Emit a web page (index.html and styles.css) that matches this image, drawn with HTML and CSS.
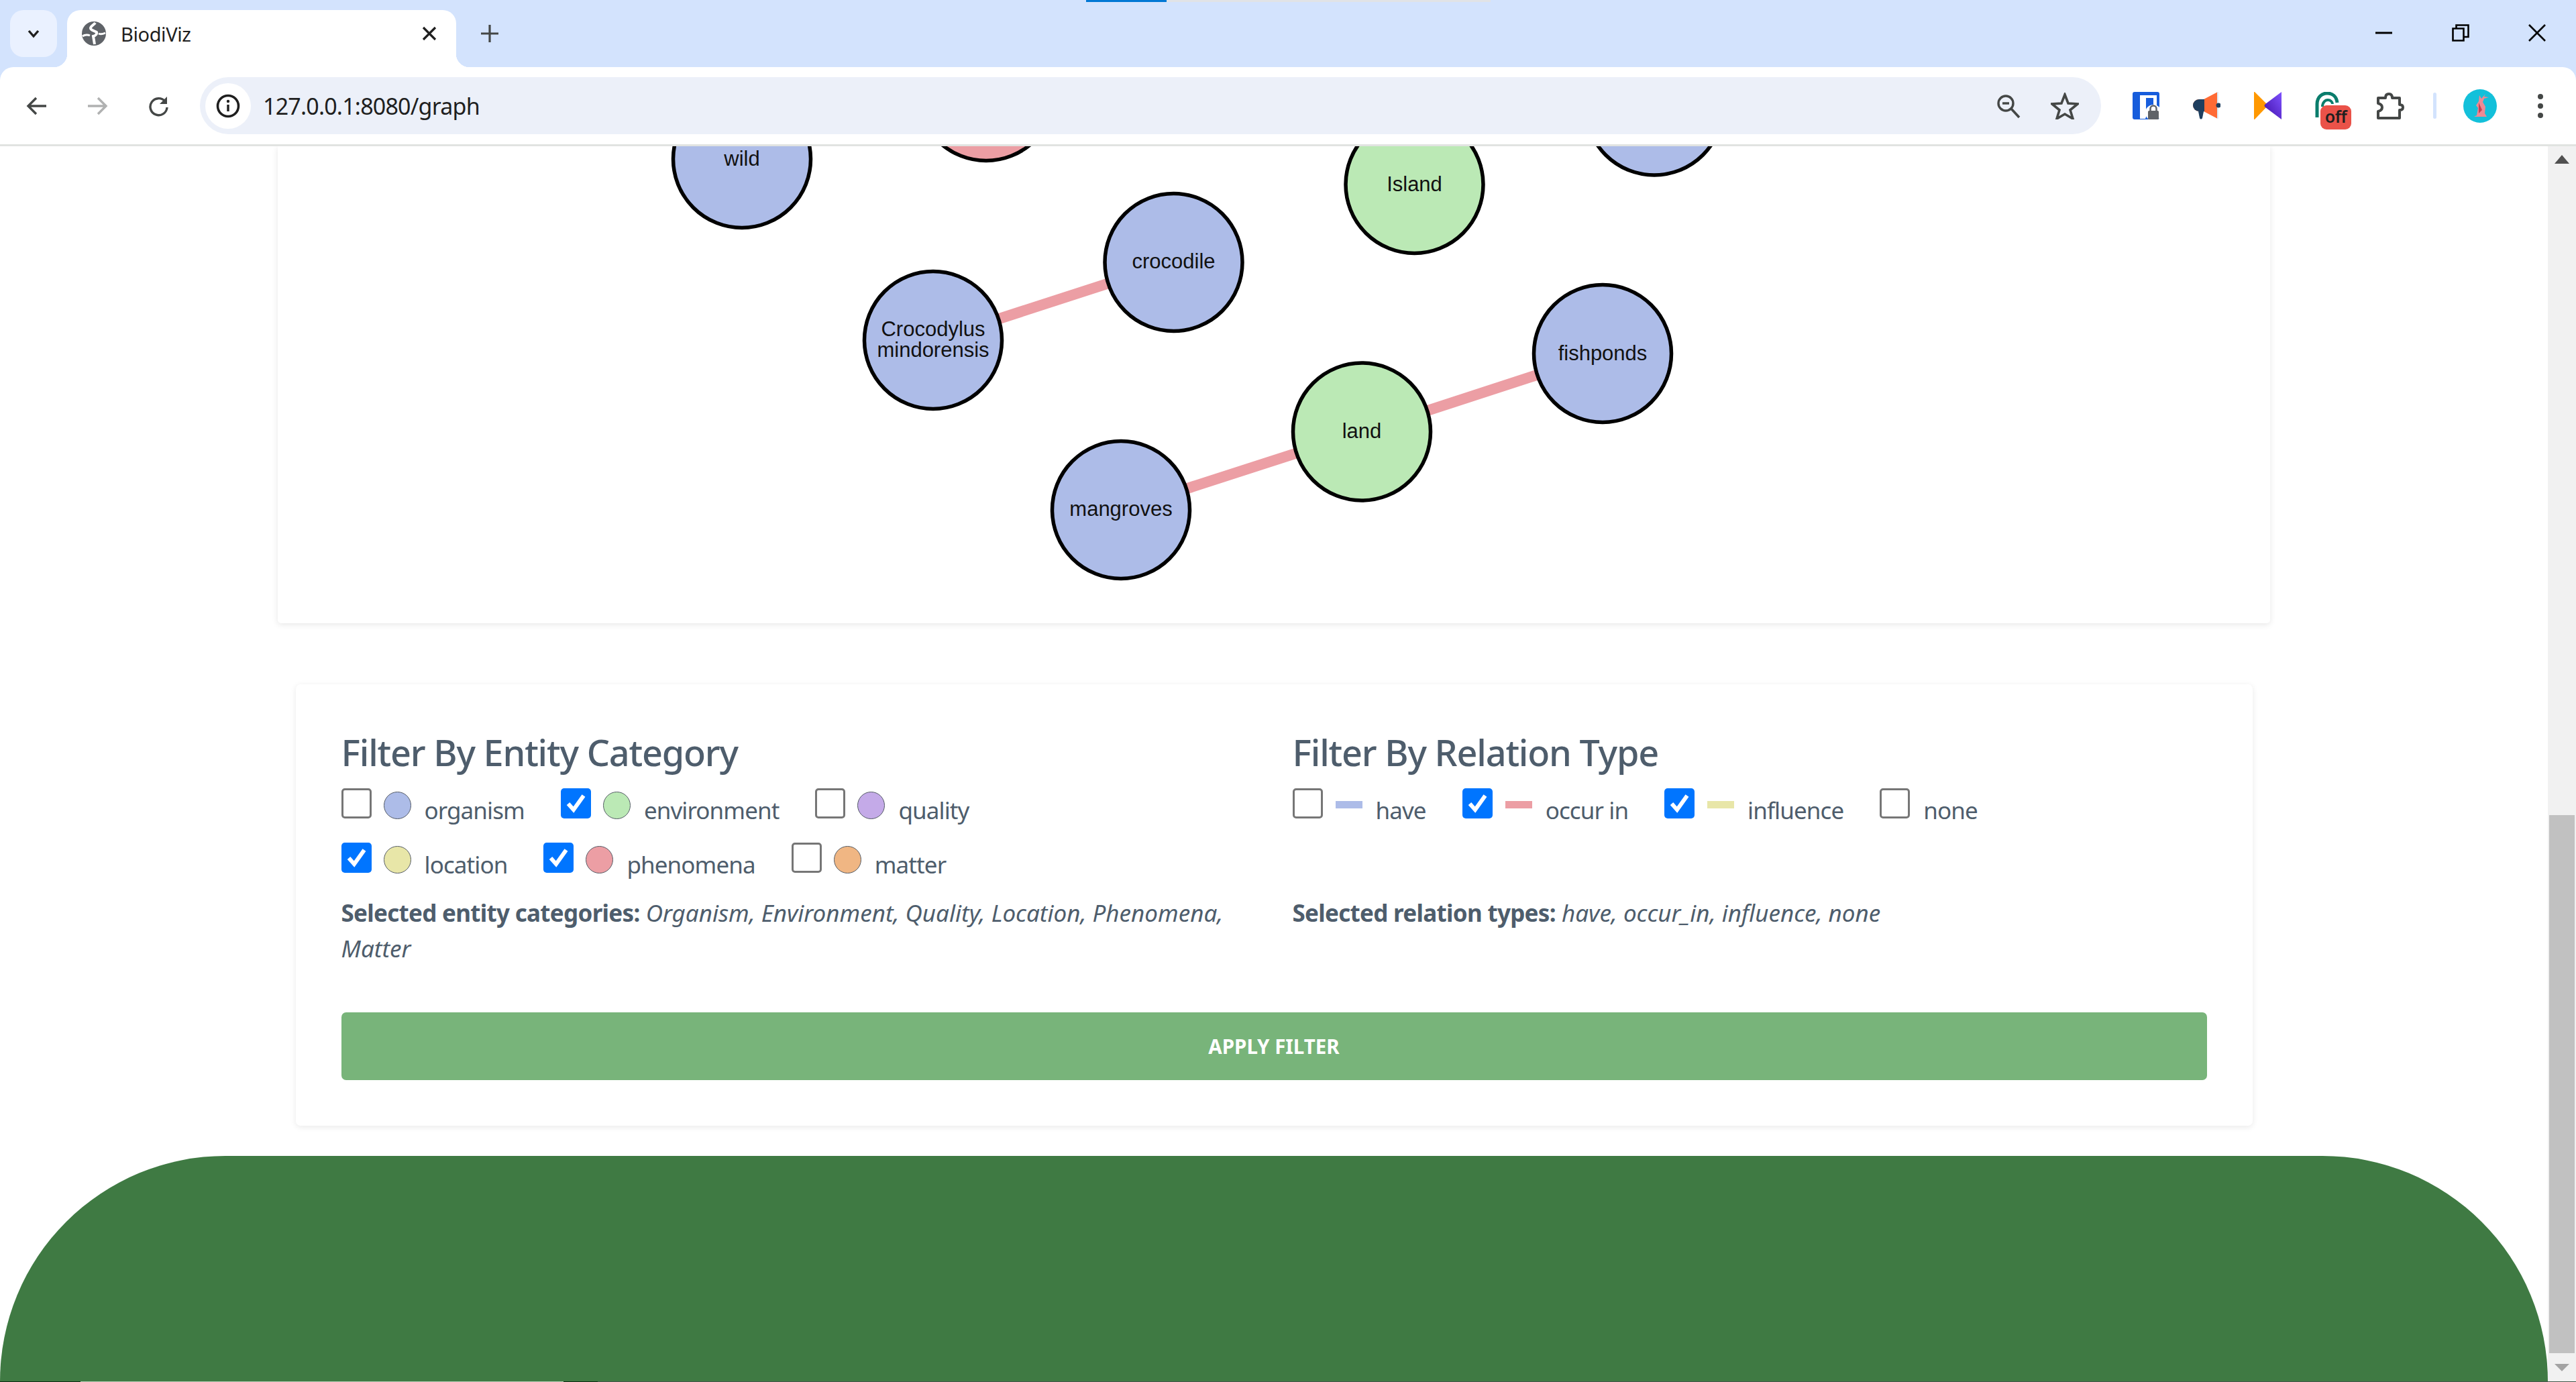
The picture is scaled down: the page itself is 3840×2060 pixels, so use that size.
FILE: index.html
```html
<!DOCTYPE html>
<html lang="en">
<head>
    <meta charset="UTF-8">
    <title>BiodiViz</title>
    <link rel="stylesheet" href="styles.css">
</head>
<body>
    <div class="tabstrip">
        <div class="load-bar"><span class="load-done"></span><span class="load-rest"></span></div>
        <button class="tab-search">
            <svg width="24" height="24" viewBox="0 0 24 24"><path d="M5 8l7 8 7-8" fill="none" stroke="#1f1f1f" stroke-width="3.4"/></svg>
        </button>
        <div class="tab">
            <svg class="favicon" width="36" height="36" viewBox="0 0 36 36">
                <circle cx="18" cy="18" r="18" fill="#5f6368"/>
                <path d="M20 2c-2 3-7 5-7 8s6 4 9 6c1 2-1 5-5 6l2 12" fill="none" stroke="#fff" stroke-width="4"/>
                <path d="M1 22c4-3 9-2 11-1M35 17c-4 2-8 2-10 1" fill="none" stroke="#fff" stroke-width="3"/>
            </svg>
            <span class="tab-title">BiodiViz</span>
            <svg class="tab-close" width="24" height="24" viewBox="0 0 24 24"><path d="M3 3l18 18M21 3L3 21" stroke="#1f1f1f" stroke-width="3.2"/></svg>
        </div>
        <svg class="new-tab" width="28" height="28" viewBox="0 0 28 28"><path d="M14 1v26M1 14h26" stroke="#444746" stroke-width="3.2"/></svg>
        <div class="window-btns">
            <svg width="26" height="26" viewBox="0 0 26 26"><path d="M0 13h25" stroke="#000" stroke-width="3"/></svg>
            <svg width="26" height="26" viewBox="0 0 26 26"><path d="M1.5 6.5h16v18h-16zM6.5 6V1.5h18V19h-6" fill="none" stroke="#000" stroke-width="2.6"/></svg>
            <svg width="26" height="26" viewBox="0 0 26 26"><path d="M1 1l24 24M25 1L1 25" stroke="#000" stroke-width="2.6"/></svg>
        </div>
    </div>

    <div class="toolbar">
        <svg class="nav-btn" width="32" height="32" viewBox="0 0 32 32"><path d="M30 16H4M15 4L3 16l12 12" fill="none" stroke="#444746" stroke-width="3.4"/></svg>
        <svg class="nav-btn" width="32" height="32" viewBox="0 0 32 32"><path d="M2 16h26M17 4l12 12-12 12" fill="none" stroke="#b0b1b1" stroke-width="3.4"/></svg>
        <svg class="nav-btn" width="32" height="32" viewBox="0 0 32 32"><path d="M26 9a12.500 12.500 0 1 0 3 9" fill="none" stroke="#444746" stroke-width="3.4"/><path d="M29 2v11H18z" fill="#444746"/></svg>
        <div class="omnibox">
            <div class="info-chip">
                <svg width="36" height="36" viewBox="0 0 36 36"><circle cx="18" cy="18" r="15.500" fill="none" stroke="#1f1f1f" stroke-width="3.6"/><path d="M18 16v10" stroke="#1f1f1f" stroke-width="3.4"/><circle cx="18" cy="11" r="2.200" fill="#1f1f1f"/></svg>
            </div>
            <span class="url">127.0.0.1:8080/graph</span>
            <svg class="omni-icon zoom-icon" width="38" height="38" viewBox="0 0 38 38"><circle cx="15" cy="15" r="11" fill="none" stroke="#444746" stroke-width="3.4"/><path d="M10 15h10" stroke="#444746" stroke-width="3.4"/><path d="M23 23l12 13" stroke="#444746" stroke-width="3.6"/></svg>
            <svg class="omni-icon" width="42" height="40" viewBox="0 0 42 40"><path d="M21 3l5 13 14 1-11 9 4 13-12-7-12 7 4-13L2 17l14-1z" fill="none" stroke="#444746" stroke-width="3.6"/></svg>
        </div>
        <div class="extensions">
            <svg class="ext" width="40" height="41" viewBox="0 0 40 41">
                <rect width="40" height="41" rx="3" fill="#175ddc"/>
                <path d="M11 5h25v22H24l-5 13h-8z" fill="#fff"/>
                <path d="M20 9h11v14h-8l-3 5z" fill="#175ddc"/>
                <circle cx="31" cy="31" r="12" fill="#fff"/>
                <rect x="23" y="28" width="16" height="13" rx="1.500" fill="#5f6368"/>
                <path d="M26.500 29v-4a4.500 4.500 0 0 1 9 0v4" fill="none" stroke="#5f6368" stroke-width="2.500"/>
            </svg>
            <svg class="ext" width="41" height="41" viewBox="0 0 41 41">
                <path d="M37 0L16 11H9a9 9 0 0 0 0 18h7l21 11z" fill="#ff6b35"/>
                <path d="M17 11H9a9 9 0 0 0 0 18h8z" fill="#1f3f5f"/>
                <path d="M8 29h8l-2 10c-1 2-3 2-4 0z" fill="#1f3f5f"/>
                <path d="M37 0v40" stroke="#dcecf7" stroke-width="2"/>
                <circle cx="38" cy="20" r="3.500" fill="#1f3f5f"/>
            </svg>
            <svg class="ext" width="41" height="41" viewBox="0 0 41 41">
                <defs><linearGradient id="kotlin" x1="0" y1="1" x2="1" y2="0"><stop offset="0" stop-color="#3f0fa8"/><stop offset="1" stop-color="#7f52ff"/></linearGradient></defs>
                <path d="M0 0h1l20 20L1 41H0z" fill="#ff9800"/>
                <path d="M41 0v41L17 23c-2-2-2-3 0-5z" fill="url(#kotlin)"/>
            </svg>
            <div class="ext ext-off">
                <svg width="36" height="38" viewBox="0 0 36 38"><path d="M3 38V18C3 8 10 2 18 2s14 5 15 14" fill="none" stroke="#0a7d6c" stroke-width="5"/><path d="M11 22c0-6 4-10 8-10 4 0 7 3 7 6" fill="none" stroke="#0a7d6c" stroke-width="4"/></svg>
                <span class="off-badge">off</span>
            </div>
            <svg class="ext" width="42" height="42" viewBox="0 0 42 42"><path d="M3 9h11c0-3 1-6 5-6s5 3 5 6h11v10c4 0 5 2 5 4s-1 4-5 4v12H3V29c4-1 6-3 6-6s-2-5-6-6z" fill="none" stroke="#444746" stroke-width="4" stroke-linejoin="round"/></svg>
            <span class="toolbar-sep"></span>
            <div class="avatar">
                <svg width="50" height="50" viewBox="0 0 50 50"><path d="M33 7l-6 7-3-5-1 9-4 6 3 4-2 11-4 2h19l-3-5 1-10-4-7 2-5 7-2-7-1z" fill="#ee8a95"/><path d="M23 20l5 11-5 5z" fill="#c9404f"/></svg>
            </div>
            <svg class="ext kebab" width="12" height="42" viewBox="0 0 12 42"><circle cx="6" cy="7" r="4" fill="#444746"/><circle cx="6" cy="21" r="4" fill="#444746"/><circle cx="6" cy="35" r="4" fill="#444746"/></svg>
        </div>
    </div>

    <div class="viewport">
        <main class="page">
            <section class="graph-card">
                <svg class="graph" width="2970" height="711" viewBox="414 218 2970 711">
                    <g class="edges">
                        <line x1="1391" y1="507" x2="1749" y2="391"/>
                        <line x1="1671" y1="760" x2="2030" y2="644"/>
                        <line x1="2030" y1="644" x2="2389" y2="527"/>
                    </g>
                    <g class="nodes">
                        <circle class="organism" cx="1106" cy="237" r="102.500"/>
                        <circle class="phenomena" cx="1470" cy="137" r="102.500"/>
                        <circle class="environment" cx="2108.500" cy="275" r="102.500"/>
                        <circle class="organism" cx="2466" cy="158.500" r="102.500"/>
                        <circle class="organism" cx="1749.500" cy="391" r="102.500"/>
                        <circle class="organism" cx="1391" cy="507" r="102.500"/>
                        <circle class="environment" cx="2030" cy="643.500" r="102.500"/>
                        <circle class="organism" cx="2389" cy="527" r="102.500"/>
                        <circle class="organism" cx="1671" cy="760" r="102.500"/>
                    </g>
                    <g class="labels">
                        <text x="1106" y="247">wild</text>
                        <text x="2108.500" y="285">Island</text>
                        <text x="1749.500" y="400">crocodile</text>
                        <text x="1391" y="501">Crocodylus</text>
                        <text x="1391" y="532">mindorensis</text>
                        <text x="2030" y="653">land</text>
                        <text x="2389" y="537">fishponds</text>
                        <text x="1671" y="769">mangroves</text>
                    </g>
                </svg>
            </section>

            <section class="filter-card">
                <div class="filter-cols">
                    <div class="filter-col">
                        <h4>Filter By Entity Category</h4>
                        <div class="check-row">
                            <label class="check"><span class="box"></span><span class="dot organism"></span><span class="check-text">organism</span></label>
                            <label class="check"><span class="box on"><svg width="45" height="45" viewBox="0 0 45 45"><path d="M11 23l8 9 15-21" fill="none" stroke="#fff" stroke-width="6"/></svg></span><span class="dot environment"></span><span class="check-text">environment</span></label>
                            <label class="check"><span class="box"></span><span class="dot quality"></span><span class="check-text">quality</span></label>
                        </div>
                        <div class="check-row">
                            <label class="check"><span class="box on"><svg width="45" height="45" viewBox="0 0 45 45"><path d="M11 23l8 9 15-21" fill="none" stroke="#fff" stroke-width="6"/></svg></span><span class="dot location"></span><span class="check-text">location</span></label>
                            <label class="check"><span class="box on"><svg width="45" height="45" viewBox="0 0 45 45"><path d="M11 23l8 9 15-21" fill="none" stroke="#fff" stroke-width="6"/></svg></span><span class="dot phenomena"></span><span class="check-text">phenomena</span></label>
                            <label class="check"><span class="box"></span><span class="dot matter"></span><span class="check-text">matter</span></label>
                        </div>
                        <p class="selected"><strong>Selected entity categories:</strong> <em>Organism, Environment, Quality, Location, Phenomena, Matter</em></p>
                    </div>
                    <div class="filter-col">
                        <h4>Filter By Relation Type</h4>
                        <div class="check-row relation-row">
                            <label class="check"><span class="box"></span><span class="dash organism"></span><span class="check-text">have</span></label>
                            <label class="check"><span class="box on"><svg width="45" height="45" viewBox="0 0 45 45"><path d="M11 23l8 9 15-21" fill="none" stroke="#fff" stroke-width="6"/></svg></span><span class="dash phenomena"></span><span class="check-text">occur in</span></label>
                            <label class="check"><span class="box on"><svg width="45" height="45" viewBox="0 0 45 45"><path d="M11 23l8 9 15-21" fill="none" stroke="#fff" stroke-width="6"/></svg></span><span class="dash location"></span><span class="check-text">influence</span></label>
                            <label class="check"><span class="box"></span><span class="check-text">none</span></label>
                        </div>
                        <p class="selected"><strong>Selected relation types:</strong> <em>have, occur_in, influence, none</em></p>
                    </div>
                </div>
                <button class="apply-btn">Apply Filter</button>
            </section>

            <footer class="footer"></footer>
        </main>
        <div class="scrollbar">
            <svg width="42" height="42" viewBox="0 0 42 42"><path d="M10 26l11-13 11 13z" fill="#505050"/></svg>
            <div class="scroll-space"></div>
            <div class="scroll-thumb"></div>
            <svg width="42" height="42" viewBox="0 0 42 42"><path d="M10 16h22L21 27z" fill="#a3a3a3"/></svg>
        </div>
    </div>
    <div class="taskbar-edge"><span class="edge-a"></span><span class="edge-b"></span><span class="edge-c"></span></div>
</body>
</html>
```

FILE: styles.css
```css
html, body {
    margin: 0;
    height: 100%;
    overflow: hidden;
}
body {
    display: flex;
    flex-direction: column;
    height: 2060px;
    background-color: #d3e3fd;
    font-family: "Noto Sans", sans-serif;
}
button {
    font-family: inherit;
    border: none;
}

/* browser chrome */
.tabstrip {
    position: relative;
    display: flex;
    align-items: flex-start;
    height: 100px;
    flex: none;
    padding: 15px 0 0 15px;
    box-sizing: border-box;
}
.load-bar {
    position: absolute;
    top: 0;
    left: 1619px;
    display: flex;
    height: 3px;
}
.load-done {
    width: 120px;
    background-color: #0078d4;
}
.load-rest {
    width: 483px;
    background-color: #e1e3e6;
}
.tab-search {
    display: flex;
    align-items: center;
    justify-content: center;
    width: 70px;
    height: 70px;
    padding: 0;
    border-radius: 20px;
    background-color: #eaf1ff;
}
.tab {
    position: relative;
    display: flex;
    align-items: center;
    width: 580px;
    height: 85px;
    margin-left: 15px;
    padding: 0 28px 15px 22px;
    box-sizing: border-box;
    background-color: #fff;
    border-radius: 20px 20px 0 0;
}
.tab::before,
.tab::after {
    content: "";
    position: absolute;
    bottom: 0;
    width: 20px;
    height: 20px;
}
.tab::before {
    left: -20px;
    background: radial-gradient(circle at 0 0, transparent 20px, #fff 20.5px);
}
.tab::after {
    right: -20px;
    background: radial-gradient(circle at 100% 0, transparent 20px, #fff 20.5px);
}
.tab-title {
    flex: 1;
    margin-left: 22px;
    font-size: 29px;
    letter-spacing: -0.4px;
    color: #1f1f1f;
}
.new-tab {
    margin: 21px 0 0 36px;
}
.window-btns {
    display: flex;
    gap: 88px;
    margin: 21px 45px 0 auto;
}
.toolbar {
    display: flex;
    align-items: center;
    flex: none;
    height: 118px;
    padding: 3px 0 3px 39px;
    box-sizing: border-box;
    background-color: #fff;
    border-bottom: 3px solid #e1e3e1;
    border-radius: 20px 20px 0 0;
}
.nav-btn {
    margin-right: 58px;
}
.nav-btn:nth-child(3) {
    margin-right: 0;
    margin-left: 1px;
}
.omnibox {
    display: flex;
    align-items: center;
    flex: none;
    width: 2834px;
    height: 85px;
    margin-left: 46px;
    padding: 0 33px 0 8px;
    box-sizing: border-box;
    background-color: #ecf0f9;
    border-radius: 43px;
}
.info-chip {
    display: flex;
    align-items: center;
    justify-content: center;
    width: 68px;
    height: 68px;
    background-color: #fff;
    border-radius: 50%;
}
.url {
    flex: 1;
    margin-left: 18px;
    font-size: 34px;
    letter-spacing: -0.8px;
    color: #1f1f1f;
}
.omni-icon {
    margin-left: 44px;
}
.extensions {
    display: flex;
    align-items: center;
    flex: 1;
    padding-left: 47px;
}
.ext {
    flex: none;
    margin-right: 50px;
}
.ext-off {
    position: relative;
    width: 41px;
    height: 41px;
}
.off-badge {
    position: absolute;
    left: 8px;
    top: 20px;
    width: 46px;
    height: 36px;
    border-radius: 9px;
    background-color: #ea5249;
    color: #1f1f1f;
    font-size: 25px;
    font-weight: 600;
    line-height: 32px;
    text-align: center;
    letter-spacing: -0.5px;
}
.toolbar-sep {
    width: 5px;
    height: 39px;
    margin-left: -7px;
    border-radius: 3px;
    background-color: #d3e3fd;
}
.avatar {
    width: 50px;
    height: 50px;
    margin-left: 40px;
    border-radius: 50%;
    background-color: #13c0da;
}
.kebab {
    margin: 0 0 0 59px;
}

/* page */
.viewport {
    display: flex;
    flex: 1;
    min-height: 0;
    background-color: #fff;
}
.page {
    display: flex;
    flex-direction: column;
    align-items: center;
    width: 3798px;
    overflow: hidden;
}
.scrollbar {
    display: flex;
    flex-direction: column;
    width: 42px;
    background-color: #f1f1f1;
}
.scroll-space {
    height: 955px;
}
.scroll-thumb {
    width: 38px;
    height: 802px;
    margin-left: 2px;
    background-color: #c1c1c1;
}
.graph-card {
    width: 2970px;
    height: 711px;
    flex: none;
    background-color: #fff;
    box-shadow: 0 2px 10px rgba(0, 0, 0, 0.1);
    border-radius: 0 0 5px 5px;
}
.graph {
    display: block;
}
.edges line {
    stroke: #ec9ea4;
    stroke-width: 16;
}
.nodes circle {
    stroke: #000;
    stroke-width: 5.5;
}
circle.organism { fill: #adbce8; }
circle.environment { fill: #bbe9b5; }
circle.phenomena { fill: #ec9ea4; }
.labels text {
    font-family: "Liberation Sans", Arial, sans-serif;
    font-size: 31px;
    text-anchor: middle;
    fill: #111;
}
.filter-card {
    display: flex;
    flex-direction: column;
    flex: none;
    width: 2917px;
    height: 658px;
    margin-top: 91px;
    padding: 67px 68px 68px;
    box-sizing: border-box;
    background-color: #fff;
    border-radius: 7px;
    box-shadow: 0 2px 10px rgba(0, 0, 0, 0.09);
    color: #4e5d6c;
}
.filter-cols {
    display: grid;
    grid-template-columns: 1418px 1fr;
    height: 422px;
}
.filter-col {
    min-width: 0;
    padding-right: 60px;
}
.filter-col h4 {
    margin: 0;
    font-size: 54px;
    font-weight: 500;
    line-height: 68px;
    letter-spacing: -1.2px;
}
.check-row {
    display: flex;
    gap: 54px;
    height: 81px;
    align-items: flex-start;
    margin-top: 20px;
}
.check-row + .check-row {
    margin-top: 0;
}
.check {
    display: flex;
    align-items: flex-start;
    font-size: 35px;
    letter-spacing: -0.9px;
}
.box {
    flex: none;
    width: 45px;
    height: 45px;
    box-sizing: border-box;
    border: 3px solid #767676;
    border-radius: 5px;
    background-color: #fff;
}
.box.on {
    border: none;
    background-color: #0075ff;
}
.box svg {
    display: block;
}
.dot {
    flex: none;
    width: 41px;
    height: 41px;
    margin: 5px 0 0 18px;
    box-sizing: border-box;
    border: 1px solid #555c66;
    border-radius: 50%;
}
.dash {
    flex: none;
    width: 40px;
    height: 11px;
    margin: 19px 0 0 19px;
}
.organism { background-color: #adbce8; }
.environment { background-color: #bbe9b5; }
.quality { background-color: #c4aae8; }
.location { background-color: #e8e6a8; }
.phenomena { background-color: #ec9ea4; }
.matter { background-color: #f0b683; }
.check-text {
    margin: 9px 0 0 20px;
    line-height: 48px;
}
.selected {
    margin: -3px 0 0;
    font-size: 35px;
    line-height: 53px;
}
.relation-row {
    margin-bottom: 81px;
}
.selected strong {
    font-weight: 700;
    letter-spacing: -0.7px;
}
.apply-btn {
    flex: none;
    height: 101px;
    border-radius: 7px;
    background-color: #78b47a;
    color: #fff;
    font-size: 29.5px;
    font-weight: 700;
    text-transform: uppercase;
}
.footer {
    flex: none;
    width: 100%;
    height: 340px;
    margin-top: 45px;
    background-color: #3f7a43;
    border-radius: 336px 336px 0 0;
}
.taskbar-edge {
    display: flex;
    flex: none;
    height: 1px;
    background-color: #44574a;
}
.edge-a {
    width: 120px;
    background-color: #0c2c12;
}
.edge-b {
    width: 720px;
    background-color: #b5ccb5;
}
.edge-c {
    width: 51px;
    background-color: #0c2c12;
}
```
